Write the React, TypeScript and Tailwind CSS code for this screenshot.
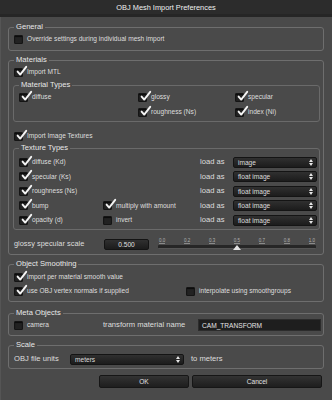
import type { ReactNode } from 'react';

function Check({ on = false }: { on?: boolean }) {
    return (
        <span className="relative inline-block w-[9px] h-[9px] shrink-0 rounded-[1px] bg-[#222] border border-[#151515] shadow-[inset_0_1px_1px_rgba(0,0,0,0.7)]">
            {on && (
                <svg className="absolute left-[1px] top-[-3px] w-[11px] h-[10px] overflow-visible" viewBox="0 0 11 10">
                    <path d="M1.6 5.6 L4.2 8.6 L10.2 0.8" fill="none" stroke="#f4f4f4" strokeWidth="1.9" strokeLinecap="round" strokeLinejoin="round" />
                </svg>
            )}
        </span>
    );
}

function CheckRow({ on, label, className = '' }: { on?: boolean; label: string; className?: string }) {
    return (
        <label className={`flex items-center gap-[4px] h-[12px] text-[6.6px] leading-[12px] whitespace-nowrap ${className}`}>
            <Check on={on} />
            <span>{label}</span>
        </label>
    );
}

function Group({ title, inner = false, className = '', children }: { title: string; inner?: boolean; className?: string; children: ReactNode }) {
    return (
        <fieldset className={`border rounded-[3px] ${inner ? 'border-[#6a6a6a]' : 'border-[#6e6e6e]'} ${className}`}>
            <legend className="ml-[5px] px-[2px] text-[7.6px] leading-[10px] text-[#e8e8e8]">{title}</legend>
            {children}
        </fieldset>
    );
}

function Arrows() {
    return (
        <svg className="w-[4px] h-[7px]" viewBox="0 0 4 7">
            <path d="M0 3 L2 0 L4 3 Z M0 4 L2 7 L4 4 Z" fill="#e6e6e6" />
        </svg>
    );
}

function Select({ value, className = '' }: { value: string; className?: string }) {
    return (
        <div className={`flex items-center justify-between h-[11px] pl-[4px] pr-[3px] rounded-[2px] border border-[#141414] bg-gradient-to-b from-[#303030] to-[#1c1c1c] text-[6.6px] leading-[11px] text-[#dcdcdc] ${className}`}>
            <span>{value}</span>
            <Arrows />
        </div>
    );
}

const textures = [
    { label: 'diffuse (Kd)', load: 'image' },
    { label: 'specular (Ks)', load: 'float image' },
    { label: 'roughness (Ns)', load: 'float image' },
    { label: 'bump', load: 'float image', extra: 'multiply with amount', extraOn: true },
    { label: 'opacity (d)', load: 'float image', extra: 'invert', extraOn: false },
];

const ticks = ['0.0', '0.2', '0.3', '0.5', '0.7', '0.8', '1.0'];

export default function App() {
    return (
        <div className="w-[332px] h-[400px] overflow-hidden bg-[#4a4a4a] text-[#dedede] font-['Liberation_Sans',Arial,sans-serif] flex flex-col">
            <div className="h-[14px] bg-[#2c2c2c] text-center text-[7.4px] leading-[15px] text-[#f0f0f0]">OBJ Mesh Import Preferences</div>
            <div className="h-[3px] bg-[#262626]" />

            <div className="flex-1 pl-[7px] pr-[8px] border-l border-[#555] flex flex-col">
                <Group title="General" className="mt-[5px]">
                    <div className="pl-[5px] pt-[1px] pb-[5px]">
                        <CheckRow label="Override settings during individual mesh import" />
                    </div>
                </Group>

                <Group title="Materials" className="mt-[4px]">
                    <div className="pl-[4px] pr-[3px] pb-[4px]">
                        <CheckRow on label="Import MTL" className="mt-[1px] ml-[1px]" />

                        <Group title="Material Types" inner className="mt-[2px]">
                            <div className="pl-[5px] pt-[1px] pb-[3px] grid grid-cols-[119px_97px_1fr] gap-y-[3px]">
                                <CheckRow on label="diffuse" />
                                <CheckRow on label="glossy" />
                                <CheckRow on label="specular" />
                                <span />
                                <CheckRow on label="roughness (Ns)" />
                                <CheckRow on label="index (Ni)" />
                            </div>
                        </Group>

                        <CheckRow on label="Import Image Textures" className="mt-[8px] ml-[1px]" />

                        <Group title="Texture Types" inner className="mt-[1px]">
                            <div className="pl-[5px] pt-[3px] pb-[3px] flex flex-col gap-[2.5px]">
                                {textures.map((t) => (
                                    <div key={t.label} className="flex items-center h-[12px]">
                                        <CheckRow on label={t.label} className="w-[84px]" />
                                        <div className="w-[97px]">
                                            {t.extra && <CheckRow on={t.extraOn} label={t.extra} />}
                                        </div>
                                        <span className="w-[33px] text-[7.6px] leading-[12px]">load as</span>
                                        <Select value={t.load} className="w-[84px]" />
                                    </div>
                                ))}
                            </div>
                        </Group>

                        <div className="flex items-center h-[12px] mt-[8px] ml-[1px]">
                            <span className="w-[90px] text-[7.4px] leading-[12px]">glossy specular scale</span>
                            <div className="w-[45px] h-[11px] rounded-[2px] border border-[#141414] bg-gradient-to-b from-[#303030] to-[#1c1c1c] text-center text-[6.6px] leading-[10px] text-[#e0e0e0]">0.500</div>
                            <div className="relative ml-[9px] w-[158px] h-[12px]">
                                <div className="flex justify-between px-[1px] text-[4.5px] leading-[5px] text-[#b0b0b0]">
                                    {ticks.map((v) => (
                                        <span key={v} className="border-b border-[#8a8a8a]">{v}</span>
                                    ))}
                                </div>
                                <div className="mt-[1px] h-[3.5px] rounded-[1px] bg-[#262626] border-b border-[#555]" />
                                <svg className="absolute left-[75px] top-[7px] w-[8px] h-[5px]" viewBox="0 0 8 5">
                                    <path d="M4 0 L8 5 L0 5 Z" fill="#e2e2e2" />
                                </svg>
                            </div>
                        </div>
                    </div>
                </Group>

                <Group title="Object Smoothing" className="mt-[4px]">
                    <div className="pl-[5px] pt-[2px] pb-[4px] flex flex-col gap-[2px]">
                        <CheckRow on label="import per material smooth value" />
                        <div className="flex items-center">
                            <CheckRow on label="use OBJ vertex normals if supplied" className="w-[172px]" />
                            <CheckRow label="interpolate using smoothgroups" />
                        </div>
                    </div>
                </Group>

                <Group title="Meta Objects" className="mt-[6px]">
                    <div className="pl-[5px] pr-[2px] pb-[3px] flex items-center h-[17px]">
                        <CheckRow label="camera" className="w-[89px]" />
                        <span className="w-[95px] text-[7.6px] leading-[12px] whitespace-nowrap">transform material name</span>
                        <div className="flex-1 h-[12px] bg-[#1e1e1e] border border-[#2c2c2c] pl-[3px] text-[6.6px] leading-[11px] text-[#e4e4e4]">CAM_TRANSFORM</div>
                    </div>
                </Group>

                <Group title="Scale" className="mt-[4px]">
                    <div className="pl-[5px] pt-[3px] pb-[3px] flex items-center h-[18px]">
                        <span className="w-[56px] text-[7.6px] leading-[12px]">OBJ file units</span>
                        <Select value="meters" className="w-[114px]" />
                        <span className="ml-[7px] text-[7.6px] leading-[12px]">to meters</span>
                    </div>
                </Group>

                <div className="flex justify-end gap-[3px] mt-[6px] pr-[2px]">
                    <button className="w-[90px] h-[13px] rounded-[2px] border border-[#161616] bg-gradient-to-b from-[#333] to-[#1e1e1e] text-[6.6px] leading-[11px] text-[#e0e0e0]">OK</button>
                    <button className="w-[130px] h-[13px] rounded-[2px] border border-[#161616] bg-gradient-to-b from-[#333] to-[#1e1e1e] text-[6.6px] leading-[11px] text-[#e0e0e0]">Cancel</button>
                </div>
            </div>
        </div>
    );
}
